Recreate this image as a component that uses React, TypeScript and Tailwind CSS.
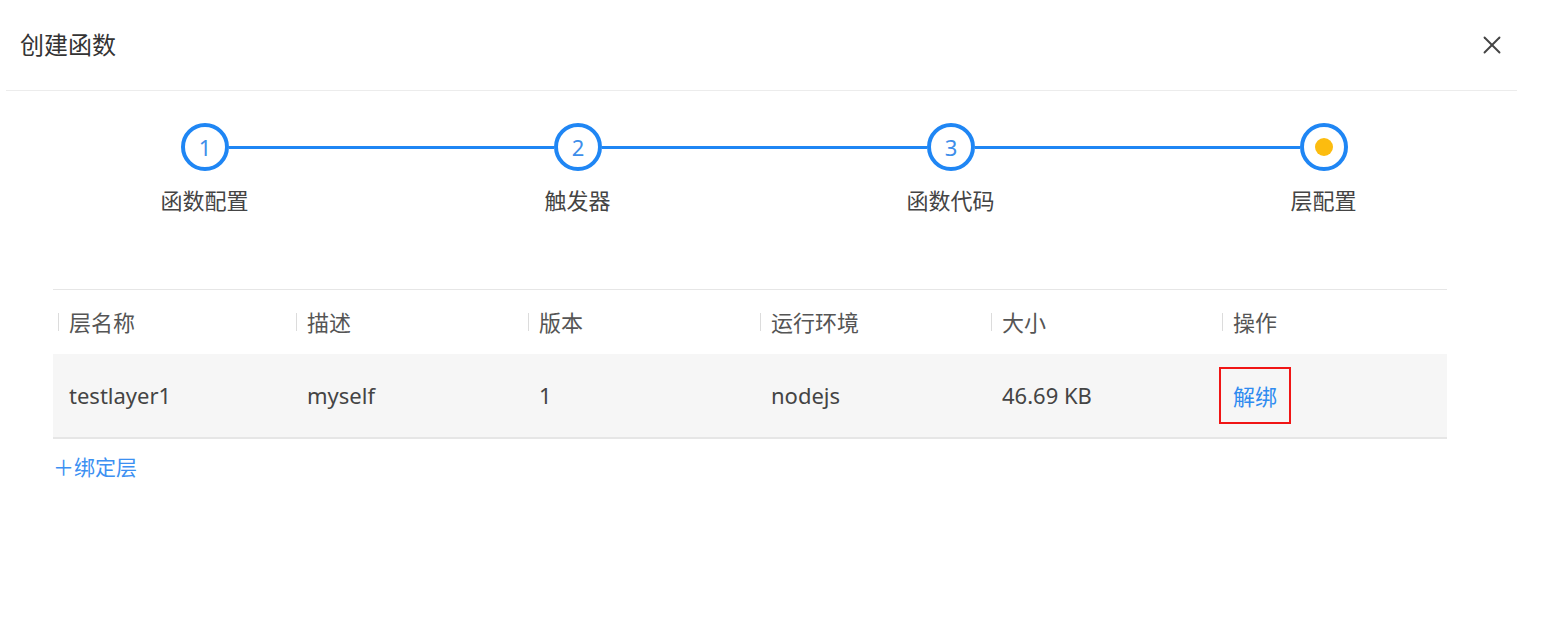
import { X } from "lucide-react";

const steps = [
	{ label: "函数配置", num: "1" },
	{ label: "触发器", num: "2" },
	{ label: "函数代码", num: "3" },
	{ label: "层配置", num: "" },
];

const columns = [
	{ title: "层名称", width: "w-[238px]" },
	{ title: "描述", width: "w-[232px]" },
	{ title: "版本", width: "w-[232px]" },
	{ title: "运行环境", width: "w-[231px]" },
	{ title: "大小", width: "w-[231px]" },
	{ title: "操作", width: "flex-1" },
];

const row = ["testlayer1", "myself", "1", "nodejs", "46.69 KB"];

function StepCircle({ num }: { num: string }) {
	return (
		<div className="flex justify-center items-center border-[4px] border-[#1f86f4] rounded-full size-[48px] shrink-0">
			{num ? (
				<span className="text-[#3d8eea] text-[22px] leading-none">{num}</span>
			) : (
				<span className="bg-[#fcbc0f] rounded-full size-[18px]" />
			)}
		</div>
	);
}

export default function App() {
	return (
		<div
			className="bg-white w-[1562px] h-[638px] overflow-hidden"
			style={{ fontFamily: '"Noto Sans", "Noto Sans CJK SC", sans-serif' }}
		>
			<div className="ml-[6px] w-[1511px]">
				{/* header */}
				<div className="flex justify-between items-center pr-[10px] pl-[14px] border-[#ececec] border-b h-[91px]">
					<span className="text-[#333] text-[24px]">创建函数</span>
					<X className="w-[30px] h-[30px] text-[#444]" strokeWidth={1.5} />
				</div>

				{/* stepper */}
				<div className="pt-[32px] pl-[175px]">
					<div className="flex items-center">
						{steps.map((s, i) => (
							<div key={s.label} className="flex items-center">
								<StepCircle num={s.num} />
								{i < steps.length - 1 && (
									<div className="bg-[#1f86f4] w-[325px] h-[3px]" />
								)}
							</div>
						))}
					</div>
				</div>
				<div className="flex mt-[14px] pl-[12px]">
					{steps.map((s) => (
						<div key={s.label} className="w-[373px] text-[#444] text-[22px] text-center leading-[30px]">
							{s.label}
						</div>
					))}
				</div>

				{/* table */}
				<div className="mt-[74px] ml-[47px] w-[1394px]">
					<div className="flex items-center border-[#e6e6e6] border-t h-[65px]">
						{columns.map((c) => (
							<div key={c.title} className={`flex items-center pl-[5px] ${c.width}`}>
								<span className="bg-[#dcdcdc] w-px h-[18px]" />
								<span className="ml-[10px] text-[#555] text-[22px]">{c.title}</span>
							</div>
						))}
					</div>
					<div className="flex items-center bg-[#f6f6f6] border-[#e6e6e6] border-b-2 h-[85px]">
						{row.map((v, i) => (
							<div key={i} className={`pl-[16px] text-[#444] text-[22px] ${columns[i].width}`}>
								{v}
							</div>
						))}
						<div className="flex-1 pl-[2px]">
							<span className="inline-block px-[12px] pt-[13px] pb-[12px] border-[#f01515] border-2 text-[#2f8bf0] text-[22px] leading-[28px]">
								解绑
							</span>
						</div>
					</div>
					<div className="mt-[13px] text-[#3c90f2] text-[21px] leading-[30px]">＋绑定层</div>
				</div>
			</div>
		</div>
	);
}
